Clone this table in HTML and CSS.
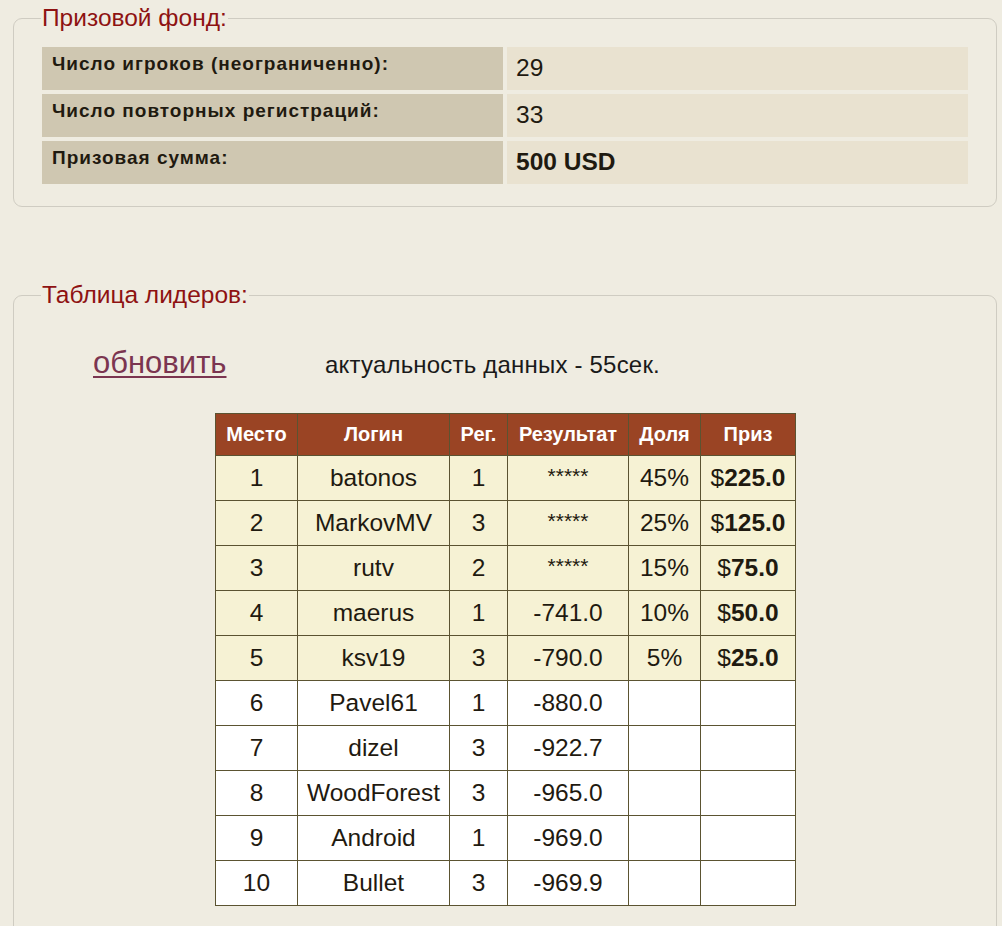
FILE: index.html
```html
<!DOCTYPE html>
<html lang="ru">
<head>
<meta charset="utf-8">
<title>Турнир</title>
<link rel="stylesheet" href="styles.css">
</head>
<body>
<fieldset class="box prize">
  <legend class="box-title">Призовой фонд:</legend>
  <div class="info">
    <div class="info-label">Число игроков (неограниченно):</div>
    <div class="info-value">29</div>
    <div class="info-label">Число повторных регистраций:</div>
    <div class="info-value">33</div>
    <div class="info-label">Призовая сумма:</div>
    <div class="info-value strong">500 USD</div>
  </div>
</fieldset>

<fieldset class="box leaders">
  <legend class="box-title">Таблица лидеров:</legend>
  <div class="refresh">
    <a class="refresh-link" href="#">обновить</a>
    <span class="freshness">актуальность данных - 55сек.</span>
  </div>
  <table class="board">
    <thead>
      <tr><th class="c-place">Место</th><th class="c-login">Логин</th><th class="c-reg">Рег.</th><th class="c-res">Результат</th><th class="c-share">Доля</th><th class="c-prize">Приз</th></tr>
    </thead>
    <tbody>
      <tr class="paid"><td>1</td><td>batonos</td><td>1</td><td class="hidden">*****</td><td>45%</td><td>$<b>225.0</b></td></tr>
      <tr class="paid"><td>2</td><td>MarkovMV</td><td>3</td><td class="hidden">*****</td><td>25%</td><td>$<b>125.0</b></td></tr>
      <tr class="paid"><td>3</td><td>rutv</td><td>2</td><td class="hidden">*****</td><td>15%</td><td>$<b>75.0</b></td></tr>
      <tr class="paid"><td>4</td><td>maerus</td><td>1</td><td>-741.0</td><td>10%</td><td>$<b>50.0</b></td></tr>
      <tr class="paid"><td>5</td><td>ksv19</td><td>3</td><td>-790.0</td><td>5%</td><td>$<b>25.0</b></td></tr>
      <tr><td>6</td><td>Pavel61</td><td>1</td><td>-880.0</td><td></td><td></td></tr>
      <tr><td>7</td><td>dizel</td><td>3</td><td>-922.7</td><td></td><td></td></tr>
      <tr><td>8</td><td>WoodForest</td><td>3</td><td>-965.0</td><td></td><td></td></tr>
      <tr><td>9</td><td>Android</td><td>1</td><td>-969.0</td><td></td><td></td></tr>
      <tr><td>10</td><td>Bullet</td><td>3</td><td>-969.9</td><td></td><td></td></tr>
    </tbody>
  </table>
</fieldset>
</body>
</html>
```

FILE: styles.css
```css
html, body {
  margin: 0;
  padding: 0;
  background: #efece1;
  font-family: "Liberation Sans", Arial, sans-serif;
  color: #1a1a1a;
}

body {
  padding-top: 5px;
}

.box {
  margin: 0 5px 0 13px;
  border: 1px solid #cfccc2;
  border-radius: 9px;
  padding: 0 27px 22px 28px;
  min-width: 0;
}

.box-title {
  padding: 0 1px;
  margin-left: -1px;
  color: #8e1212;
  font-size: 24.5px;
  line-height: 26px;
}

.prize .info {
  margin-top: 16px;
  display: grid;
  grid-template-columns: 461px 461px;
  grid-auto-rows: 43px;
  gap: 4px;
}

.info-label {
  background: #cfc7b1;
  font-weight: bold;
  font-size: 19px;
  letter-spacing: 1px;
  padding: 6px 10px 0;
  color: #1f1a10;
}

.info-value {
  background: #e9e2d0;
  font-size: 24.5px;
  padding: 7px 10px 0 9px;
  color: #1f1a10;
}

.info-value.strong {
  font-weight: bold;
}

.leaders {
  margin-top: 75px;
  padding-bottom: 40px;
}

.refresh {
  display: flex;
  align-items: baseline;
  padding: 37px 0 0 51px;
  height: 93px;
  box-sizing: border-box;
}

.refresh-link {
  color: #7b3550;
  font-size: 31px;
  text-decoration: underline;
  text-decoration-thickness: 2px;
  text-underline-offset: 3px;
  width: 232px;
}

.freshness {
  font-size: 24px;
  letter-spacing: 0.2px;
  color: #1a1a1a;
}

.board {
  margin: 12px auto 0;
  border-collapse: collapse;
  border: 1px solid #5b5331;
}

.board th, .board td {
  border: 1px solid #5b5331;
  text-align: center;
  padding: 0;
}

.board th {
  background: #9a4424;
  color: #ffffff;
  font-size: 20px;
  font-weight: bold;
  height: 41px;
}

.board td {
  background: #ffffff;
  font-size: 24.5px;
  height: 44px;
  color: #1f1a10;
}

.board tr.paid td {
  background: #f6f2d4;
}

.board td.hidden {
  font-size: 21px;
  vertical-align: top;
  padding-top: 8px;
  height: 36px;
}

.c-place { width: 81px; }
.c-login { width: 151px; }
.c-reg { width: 57px; }
.c-res { width: 120px; }
.c-share { width: 71px; }
.c-prize { width: 94px; }
```
